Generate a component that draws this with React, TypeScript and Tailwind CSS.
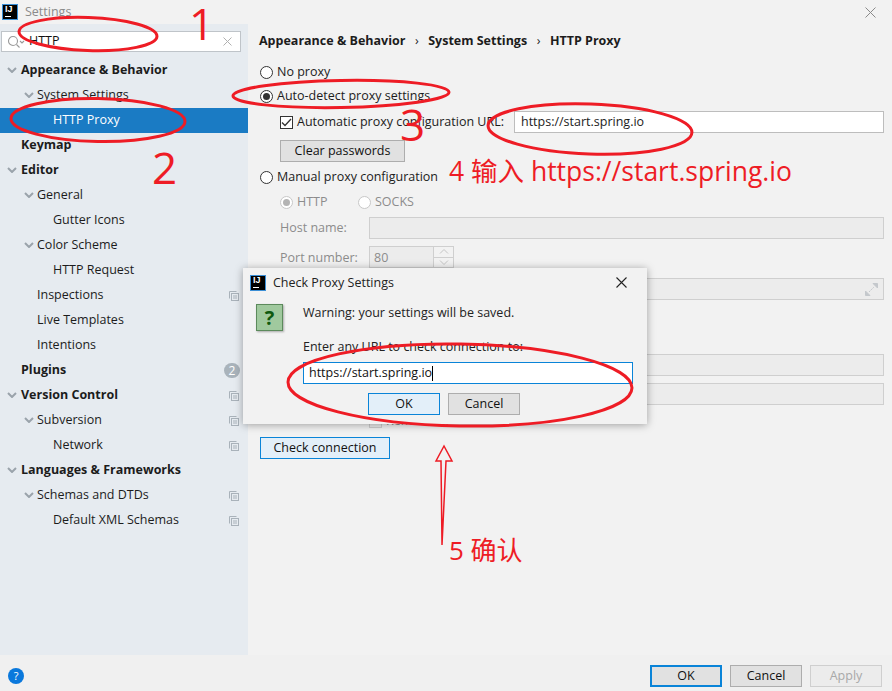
const FONT = "font-['Open_Sans','Noto_Sans_CJK_SC',sans-serif]";

type TreeRow = {
  label: string;
  level: 0 | 1 | 2;
  bold?: boolean;
  arrow?: boolean;
  selected?: boolean;
  copy?: boolean;
  badge?: string;
};

const ROWS: TreeRow[] = [
  { label: "Appearance & Behavior", level: 0, bold: true, arrow: true },
  { label: "System Settings", level: 1, arrow: true },
  { label: "HTTP Proxy", level: 2, selected: true },
  { label: "Keymap", level: 0, bold: true },
  { label: "Editor", level: 0, bold: true, arrow: true },
  { label: "General", level: 1, arrow: true },
  { label: "Gutter Icons", level: 2 },
  { label: "Color Scheme", level: 1, arrow: true },
  { label: "HTTP Request", level: 2 },
  { label: "Inspections", level: 1, copy: true },
  { label: "Live Templates", level: 1 },
  { label: "Intentions", level: 1 },
  { label: "Plugins", level: 0, bold: true, badge: "2" },
  { label: "Version Control", level: 0, bold: true, copy: true, arrow: true },
  { label: "Subversion", level: 1, copy: true, arrow: true },
  { label: "Network", level: 2, copy: true },
  { label: "Languages & Frameworks", level: 0, bold: true, arrow: true },
  { label: "Schemas and DTDs", level: 1, copy: true, arrow: true },
  { label: "Default XML Schemas", level: 2, copy: true },
];

function IjLogo() {
  return (
    <div className="relative h-4 w-4 shrink-0 border border-[#3b8fd6] bg-black">
      <span className="absolute left-[2px] top-[-1px] font-['Liberation_Sans',sans-serif] text-[9px] font-bold leading-[11px] text-white">
        IJ
      </span>
      <span className="absolute bottom-[2px] left-[2px] h-px w-[6px] bg-white" />
    </div>
  );
}

function CopyIcon() {
  return (
    <svg width="10" height="10" viewBox="0 0 10 10" fill="none" stroke="#a9b2ba" className="shrink-0">
      <path d="M.5 7.5V.5h7" />
      <rect x="2.5" y="2.5" width="7" height="7" />
      <path d="M4 5h4M4 7h4" />
    </svg>
  );
}

function Chevron() {
  return (
    <svg width="10" height="6" viewBox="0 0 10 6" fill="none" stroke="#9aa3ab" strokeWidth="2">
      <path d="M1 1l4 4 4-4" />
    </svg>
  );
}

function TreeItem({ row }: { row: TreeRow }) {
  const pad = row.level === 0 ? "pl-[21px]" : row.level === 1 ? "pl-[37px]" : "pl-[53px]";
  const arrowLeft = row.level === 0 ? "left-[7px]" : "left-[24px]";
  return (
    <div
      className={`relative flex h-[25px] items-center pr-[9px] ${pad} ${
        row.selected ? "bg-[#1a7bc4] text-white" : "text-[#1c1c1c]"
      } ${row.bold ? "font-bold" : ""}`}
    >
      {row.arrow && (
        <span className={`absolute top-[9px] flex ${arrowLeft}`}>
          <Chevron />
        </span>
      )}
      <span className="flex-1 whitespace-nowrap">{row.label}</span>
      {row.copy && <CopyIcon />}
      {row.badge && (
        <span className="-mr-[1px] flex h-[15px] w-4 items-center justify-center rounded-full bg-[#a9b3bb] text-[12px] font-normal text-white">
          {row.badge}
        </span>
      )}
    </div>
  );
}

function Radio({ checked, disabled }: { checked?: boolean; disabled?: boolean }) {
  return (
    <span
      className={`flex h-[13px] w-[13px] shrink-0 items-center justify-center rounded-full border bg-white ${
        disabled ? "border-[#c8c8c8]" : "border-[#333333]"
      }`}
    >
      {checked && <span className={`h-[7px] w-[7px] rounded-full ${disabled ? "bg-[#b4b4b4]" : "bg-[#333333]"}`} />}
    </span>
  );
}

function Button({
  children,
  className,
}: {
  children: React.ReactNode;
  className: string;
}) {
  return <div className={`flex h-[22px] shrink-0 items-center justify-center border ${className}`}>{children}</div>;
}

function Annotations() {
  return (
    <svg className="pointer-events-none absolute inset-0" width="892" height="691" fill="none" stroke="#ee1c25" strokeWidth="3">
      <ellipse cx="88" cy="34" rx="69" ry="16.5" transform="rotate(2 88 34)" />
      <ellipse cx="98" cy="120" rx="87" ry="21.5" transform="rotate(1 98 120)" />
      <ellipse cx="341" cy="94" rx="108" ry="13.5" transform="rotate(-1 341 94)" />
      <ellipse cx="590" cy="129" rx="102" ry="25" transform="rotate(2 590 129)" />
      <ellipse cx="460" cy="385" rx="172" ry="41" transform="rotate(1 460 385)" />
      <path strokeWidth="1.5" d="M442 545L441 461H436L444 446L452 461H446L442 545" />
    </svg>
  );
}

function AnnotationText() {
  return (
    <div className="pointer-events-none font-['Open_Sans','Noto_Sans_CJK_SC',sans-serif] font-normal text-[#ee1c25]">
      <span className="absolute left-[189px] top-0 text-[44px] leading-[46px]">1</span>
      <span className="absolute left-[152px] top-[144px] text-[44px] leading-[46px]">2</span>
      <span className="absolute left-[400px] top-[101px] text-[44px] leading-[46px]">3</span>
      <span className="absolute left-[449px] top-[153px] whitespace-nowrap text-[26.5px] leading-[36px]">4 输入 https://start.spring.io</span>
      <span className="absolute left-[449px] top-[533px] whitespace-nowrap text-[26px] leading-[34px]">5 确认</span>
    </div>
  );
}

function ProxyDialog() {
  return (
    <div className="absolute left-[243px] top-[268px] h-[156px] w-[404px] bg-[#f2f2f2] shadow-[0_1px_8px_rgba(0,0,0,0.35)]">
      <div className="flex h-[29px] items-center pl-[7px] pr-[20px]">
        <IjLogo />
        <span className="ml-[7px] flex-1 pt-[2px] text-[#222222]">Check Proxy Settings</span>
        <svg width="11" height="11" viewBox="0 0 11 11" stroke="#222222" strokeWidth="1.1">
          <path d="M.5.5l10 10M10.5.5l-10 10" />
        </svg>
      </div>
      <div className="flex pl-[13px] pt-[7px]">
        <div className="flex h-[27px] w-[27px] shrink-0 items-center justify-center border border-[#5c8a5c] bg-[#a0c99e] text-[20px] font-bold text-[#0f5a0f] shadow-[1px_1px_2px_rgba(0,0,0,0.3)]">
          ?
        </div>
        <div className="ml-[20px] flex w-[330px] flex-col">
          <div className="h-[18px] leading-[18px] text-[#222222]">Warning: your settings will be saved.</div>
          <div className="mt-[16px] h-[18px] leading-[18px] text-[#222222]">Enter any URL to check connection to:</div>
          <div className="mt-[6px] flex h-[22px] items-center border border-[#0a84d8] bg-white pl-[5px] text-[#111111]">
            https://start.spring.io
            <span className="h-[15px] w-px bg-black" />
          </div>
          <div className="ml-[65px] mt-[9px] flex gap-[8px]">
            <Button className="w-[72px] border-[#0a84d8] bg-[#e3eff9] text-[#111111]">OK</Button>
            <Button className="w-[72px] border-[#adadad] bg-[#e1e1e1] text-[#111111]">Cancel</Button>
          </div>
        </div>
      </div>
    </div>
  );
}

export default function App() {
  return (
    <div className={`relative flex h-[691px] w-[892px] flex-col overflow-hidden bg-[#f2f2f2] text-[12.5px] ${FONT}`}>
      {/* title bar */}
      <div className="flex h-6 shrink-0 items-center pl-[2px] pr-[16px]">
        <IjLogo />
        <span className="ml-[7px] flex-1 text-[#8a8a8a]">Settings</span>
        <svg width="11" height="11" viewBox="0 0 11 11" stroke="#8a8a8a" strokeWidth="1">
          <path d="M.5.5l10 10M10.5.5l-10 10" />
        </svg>
      </div>

      <div className="flex min-h-0 flex-1">
        {/* sidebar */}
        <div className="flex w-[248px] shrink-0 flex-col bg-[#e6ebf0]">
          <div className="ml-[1px] mr-[7px] mt-[7px] flex h-[21px] items-center border border-[#bfc4c9] bg-white pl-[5px] pr-[8px]">
            <svg width="18" height="14" viewBox="0 0 18 14" fill="none" stroke="#9a9a9a" strokeWidth="1.1" className="shrink-0">
              <circle cx="6" cy="6" r="4.5" />
              <path d="M9.5 9.5l3 3" />
              <path d="M13 6l2 2 2-2" />
            </svg>
            <span className="ml-[4px] flex-1 text-[#111111]">HTTP</span>
            <svg width="9" height="9" viewBox="0 0 9 9" stroke="#b0b0b0" strokeWidth="1">
              <path d="M.5.5l8 8M8.5.5l-8 8" />
            </svg>
          </div>
          <div className="mt-[6px]">
            {ROWS.map((row) => (
              <TreeItem key={row.label} row={row} />
            ))}
          </div>
        </div>

        {/* settings panel */}
        <div className="flex flex-1 flex-col text-[#1c1c1c]">
          <div className="flex h-[33px] items-center gap-[9.5px] pl-[11px] pt-[1px] font-bold">
            <span>Appearance &amp; Behavior</span>
            <span className="font-normal">›</span>
            <span>System Settings</span>
            <span className="font-normal">›</span>
            <span>HTTP Proxy</span>
          </div>

          <div className="flex flex-col pl-[12px] pr-[8px]">
            <div className="mt-[3px] flex h-[24px] items-center gap-[4px]">
              <Radio />
              No proxy
            </div>
            <div className="flex h-[24px] items-center gap-[4px]">
              <Radio checked />
              Auto-detect proxy settings
            </div>
            <div className="ml-[20px] mt-[3px] flex h-[22px] items-center">
              <span className="flex h-[13px] w-[13px] shrink-0 items-center justify-center border border-[#333333] bg-white">
                <svg width="11" height="9" viewBox="0 0 11 9" fill="none" stroke="#333333" strokeWidth="1.3">
                  <path d="M1 4.5l3 3 6-6.5" />
                </svg>
              </span>
              <span className="ml-[4px] whitespace-nowrap">Automatic proxy configuration URL:</span>
              <div className="ml-[10px] flex h-[22px] flex-1 items-center border border-[#bdbdbd] bg-white pl-[6px]">
                https://start.spring.io
              </div>
            </div>
            <Button className="ml-[20px] mt-[7px] w-[125px] border-[#adadad] bg-[#e1e1e1] text-[#111111]">Clear passwords</Button>
            <div className="mt-[3px] flex h-[24px] items-center gap-[4px]">
              <Radio />
              Manual proxy configuration
            </div>

            <div className="ml-[20px] flex flex-col text-[#8c8c8c]">
              <div className="mt-[1px] flex h-[24px] items-center gap-[4px]">
                <Radio checked disabled />
                <span className="w-[57px]">HTTP</span>
                <Radio disabled />
                SOCKS
              </div>
              <div className="mt-[3px] flex h-[22px] items-center">
                <span className="w-[89px]">Host name:</span>
                <div className="h-[22px] flex-1 border border-[#cfcfcf] bg-[#ececec]" />
              </div>
              <div className="mt-[7px] flex h-[22px] items-center">
                <span className="w-[89px] pt-[2px]">Port number:</span>
                <div className="flex h-[22px] w-[85px] items-center border border-[#cfcfcf] bg-[#ececec] pl-[4px]">
                  <span className="flex-1 pt-[2px]">80</span>
                  <div className="flex h-full w-[20px] flex-col border-l border-[#cfcfcf] bg-[#f2f2f2]">
                    <div className="flex flex-1 items-center justify-center border-b border-[#cfcfcf]">
                      <svg width="10" height="5" viewBox="0 0 10 5" fill="none" stroke="#c4c4c4">
                        <path d="M1 4.5l4-4 4 4" />
                      </svg>
                    </div>
                    <div className="flex flex-1 items-center justify-center">
                      <svg width="10" height="5" viewBox="0 0 10 5" fill="none" stroke="#c4c4c4">
                        <path d="M1 .5l4 4 4-4" />
                      </svg>
                    </div>
                  </div>
                </div>
              </div>
              <div className="ml-[89px] mt-[10px] flex h-[22px] items-center justify-end border border-[#cfcfcf] bg-[#ececec] pr-[5px]">
                <svg width="13" height="13" viewBox="0 0 13 13" fill="#c4c8cc" stroke="#c4c8cc">
                  <path d="M8 .5h4.5V5zM.5 8v4.5H5z" />
                  <path d="M4 9l5-5" fill="none" strokeDasharray="2 1" />
                </svg>
              </div>
              <div className="ml-[89px] mt-[54px] h-[22px] border border-[#cfcfcf] bg-[#ececec]" />
              <div className="ml-[89px] mt-[7px] h-[22px] border border-[#cfcfcf] bg-[#ececec]" />
              <div className="ml-[89px] mt-[7px] flex h-[18px] items-center gap-[4px]">
                <span className="h-[13px] w-[13px] border border-[#cfcfcf] bg-[#ececec]" />
                Remember
              </div>
            </div>

            <Button className="mt-[7px] w-[130px] border-[#0a84d8] bg-[#e3eff9] text-[#111111]">Check connection</Button>
          </div>
        </div>
      </div>

      {/* footer */}
      <div className="flex h-[36px] shrink-0 items-start bg-[#f0f0f0] pl-[8px] pr-[10px] pt-[10px]">
        <span className="mt-[3px] flex h-4 w-4 items-center justify-center rounded-full bg-[#0a78dc] text-[11px] text-white">?</span>
        <div className="ml-auto flex gap-[8px]">
          <Button className="w-[72px] border-2 border-[#0a84d8] bg-[#e1e1e1] text-[#111111]">OK</Button>
          <Button className="w-[72px] border-[#adadad] bg-[#e1e1e1] text-[#111111]">Cancel</Button>
          <Button className="w-[72px] border-[#cfcfcf] bg-[#ececec] text-[#a8a8a8]">Apply</Button>
        </div>
      </div>

      <ProxyDialog />
      <Annotations />
      <AnnotationText />
    </div>
  );
}
